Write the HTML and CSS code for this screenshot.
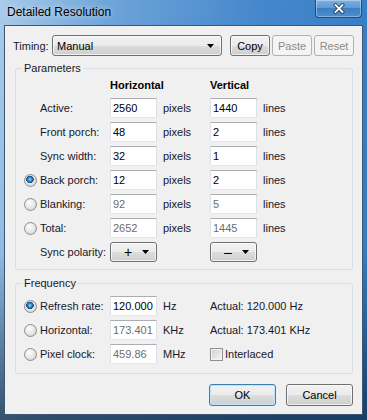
FILE: index.html
```html
<!DOCTYPE html>
<html lang="en">
<head>
    <meta charset="UTF-8">
    <meta name="viewport" content="width=device-width, initial-scale=1.0">
    <title>Detailed Resolution</title>
    <link rel="stylesheet" href="styles.css">
</head>
<body>

    <div class="window">
        <!-- Title bar with close button -->
        <div class="titlebar">
            <span class="title">Detailed Resolution</span>
            <button class="close" type="button">
                <svg width="12" height="11" viewBox="0 0 12 11">
                    <path d="M2.5 2 L9.5 9 M9.5 2 L2.5 9" stroke="#2a3d55" stroke-width="3.6" stroke-linecap="square"/>
                    <path d="M2.5 2 L9.5 9 M9.5 2 L2.5 9" stroke="#ffffff" stroke-width="1.8" stroke-linecap="square"/>
                </svg>
            </button>
        </div>

        <div class="client">
            <!-- Timing selection -->
            <div class="timing">
                <label class="timing-label">Timing:</label>
                <div class="combo">
                    <span>Manual</span>
                    <svg width="7" height="4" viewBox="0 0 7 4"><polygon points="0,0 7,0 3.5,4" fill="#000"/></svg>
                </div>
                <button class="btn small" type="button">Copy</button>
                <button class="btn small" type="button" disabled>Paste</button>
                <button class="btn small" type="button" disabled>Reset</button>
            </div>

            <!-- Parameters group -->
            <fieldset class="group params">
                <legend>Parameters</legend>
                <div class="grid param-grid">
                    <span class="head head-h">Horizontal</span>
                    <span class="head head-v">Vertical</span>

                    <span class="lbl">Active:</span>
                    <input class="field" type="text" value="2560">
                    <span class="unit">pixels</span>
                    <input class="field" type="text" value="1440">
                    <span class="unit">lines</span>

                    <span class="lbl">Front porch:</span>
                    <input class="field" type="text" value="48">
                    <span class="unit">pixels</span>
                    <input class="field" type="text" value="2">
                    <span class="unit">lines</span>

                    <span class="lbl">Sync width:</span>
                    <input class="field" type="text" value="32">
                    <span class="unit">pixels</span>
                    <input class="field" type="text" value="1">
                    <span class="unit">lines</span>

                    <input class="radio" type="radio" name="calc" checked>
                    <span class="lbl">Back porch:</span>
                    <input class="field" type="text" value="12">
                    <span class="unit">pixels</span>
                    <input class="field" type="text" value="2">
                    <span class="unit">lines</span>

                    <input class="radio" type="radio" name="calc">
                    <span class="lbl">Blanking:</span>
                    <input class="field off" type="text" value="92" readonly>
                    <span class="unit">pixels</span>
                    <input class="field off" type="text" value="5" readonly>
                    <span class="unit">lines</span>

                    <input class="radio" type="radio" name="calc">
                    <span class="lbl">Total:</span>
                    <input class="field off" type="text" value="2652" readonly>
                    <span class="unit">pixels</span>
                    <input class="field off" type="text" value="1445" readonly>
                    <span class="unit">lines</span>

                    <span class="lbl">Sync polarity:</span>
                    <div class="btn polarity">
                        <span class="sign">+</span>
                        <svg width="7" height="4" viewBox="0 0 7 4"><polygon points="0,0 7,0 3.5,4" fill="#000"/></svg>
                    </div>
                    <div class="btn polarity pol-v">
                        <span class="sign">&ndash;</span>
                        <svg width="7" height="4" viewBox="0 0 7 4"><polygon points="0,0 7,0 3.5,4" fill="#000"/></svg>
                    </div>
                </div>
            </fieldset>

            <!-- Frequency group -->
            <fieldset class="group freq">
                <legend>Frequency</legend>
                <div class="grid freq-grid">
                    <input class="radio" type="radio" name="freq" checked>
                    <span class="lbl">Refresh rate:</span>
                    <input class="field" type="text" value="120.000">
                    <span class="unit">Hz</span>
                    <span class="actual">Actual: 120.000 Hz</span>

                    <input class="radio" type="radio" name="freq">
                    <span class="lbl">Horizontal:</span>
                    <input class="field off" type="text" value="173.401" readonly>
                    <span class="unit">KHz</span>
                    <span class="actual">Actual: 173.401 KHz</span>

                    <input class="radio" type="radio" name="freq">
                    <span class="lbl">Pixel clock:</span>
                    <input class="field off" type="text" value="459.86" readonly>
                    <span class="unit">MHz</span>
                    <label class="actual check-row"><input class="check" type="checkbox"> Interlaced</label>
                </div>
            </fieldset>

            <!-- Dialog buttons -->
            <div class="actions">
                <button class="btn wide default" type="button">OK</button>
                <button class="btn wide" type="button">Cancel</button>
            </div>
        </div>
    </div>

</body>
</html>
```

FILE: styles.css
```css
body {
    margin: 0;
    font-family: "Liberation Sans", Arial, sans-serif;
    font-size: 11px;
    color: #16182a;
}

.window {
    width: 367px;
    height: 420px;
    display: flex;
    flex-direction: column;
    background:
        linear-gradient(to bottom, rgba(0, 0, 0, 0) 60%, rgba(12, 30, 50, 0.65) 100%),
        linear-gradient(100deg, #a9cbeb 0%, #6ea4d8 25%, #4587cb 60%, #2f79c3 100%);
}

.titlebar {
    height: 25px;
    display: flex;
    justify-content: space-between;
    align-items: flex-start;
}

.title {
    font-size: 12px;
    line-height: 15px;
    padding: 5px 0 0 7px;
    color: #000;
    text-shadow: 0 0 6px rgba(255, 255, 255, 0.8);
}

.close {
    width: 47px;
    height: 18px;
    margin-right: 5px;
    padding: 0;
    border: 1px solid #2b4a70;
    border-top: none;
    border-radius: 0 0 4px 4px;
    background: linear-gradient(#7eb1e2 0%, #5c98d4 50%, #3e7fc4 50%, #4d8ed0 100%);
    box-shadow: inset 0 0 0 1px rgba(255, 255, 255, 0.35);
    display: flex;
    align-items: center;
    justify-content: center;
}

.client {
    margin: 0 4px;
    height: 388px;
    border: 1px solid #3d5773;
    background-color: #f0f0f0;
    display: flex;
    flex-direction: column;
}

/* timing row */
.timing {
    display: flex;
    align-items: center;
    height: 21px;
    margin: 9px 0 0 8px;
}

.timing-label {
    width: 39px;
}

.combo {
    width: 170px;
    height: 21px;
    box-sizing: border-box;
    margin-right: 8px;
    padding: 0 7px 0 4px;
    display: flex;
    align-items: center;
    justify-content: space-between;
    color: #000;
    border: 1px solid #707070;
    border-radius: 3px;
    background: linear-gradient(#f2f2f2 0%, #ebebeb 50%, #dddddd 50%, #cfcfcf 100%);
    box-shadow: inset 0 0 0 1px rgba(255, 255, 255, 0.7);
}

.btn {
    font: inherit;
    color: #000;
    padding: 0;
    box-sizing: border-box;
    border: 1px solid #707070;
    border-radius: 3px;
    background: linear-gradient(#f2f2f2 0%, #ebebeb 50%, #dddddd 50%, #cfcfcf 100%);
    box-shadow: inset 0 0 0 1px rgba(255, 255, 255, 0.7);
}

.btn:disabled {
    color: #8b8b8b;
    border-color: #adb2b5;
    background: #f4f4f4;
    box-shadow: none;
}

.small {
    width: 40px;
    height: 21px;
    margin-right: 2px;
}

/* group boxes */
.group {
    margin: 6px 9px 0 10px;
    padding: 4px 8px 7px 8px;
    border: 1px solid #d5dfe5;
    border-radius: 3px;
    min-width: 0;
}

.group legend {
    line-height: 13px;
    padding: 0 2px;
    margin-left: -2px;
}

.freq {
    margin-top: 7px;
    padding-top: 6px;
    padding-bottom: 9px;
}

.grid {
    display: grid;
    grid-template-columns: 16px 70px 47px 53px 47px auto;
    row-gap: 4px;
    align-items: center;
}

.param-grid {
    grid-template-rows: 15px repeat(7, 20px);
}

.freq-grid {
    grid-template-rows: repeat(3, 20px);
}

.head {
    font-weight: bold;
    color: #000;
    align-self: start;
    line-height: 13px;
}

.head-h {
    grid-column: 3 / span 2;
}

.head-v {
    grid-column: 5 / span 2;
}

.lbl {
    grid-column: 2;
}

.unit {
    padding-left: 6px;
}

.field {
    width: 47px;
    height: 20px;
    box-sizing: border-box;
    margin: 0;
    padding: 0 2px;
    font: inherit;
    color: #000;
    background: #fff;
    border: 1px solid;
    border-color: #abadb3 #dbdfe6 #e3e9ef #e2e3ea;
    outline: none;
}

.field.off {
    color: #6d6d6d;
}

.radio {
    appearance: none;
    width: 13px;
    height: 13px;
    margin: 0;
    border: 1px solid #8d8d8d;
    border-radius: 50%;
    background: radial-gradient(circle at 40% 35%, #ffffff 0%, #e4e4e4 55%, #c9c9c9 100%);
}

.radio:checked {
    background:
        radial-gradient(circle at 45% 40%, #b4e8ff 0, #3a9ae0 1.5px, #1b5f9e 3px, #2d4d6d 3.6px, rgba(0, 0, 0, 0) 4px),
        radial-gradient(circle at 40% 35%, #ffffff 0%, #e4e4e4 55%, #c9c9c9 100%);
}

.polarity {
    grid-column: 3;
    width: 47px;
    height: 20px;
    display: flex;
    align-items: center;
    justify-content: space-between;
    padding: 0 7px 0 13px;
}

.pol-v {
    grid-column: 5;
}

.sign {
    font-size: 14px;
}

.actual {
    grid-column: 5 / span 2;
}

.check-row {
    display: flex;
    align-items: center;
    gap: 2px;
}

.check {
    appearance: none;
    width: 13px;
    height: 13px;
    margin: 0;
    border: 1px solid #8e8f8f;
    background: linear-gradient(135deg, #cfcfcf 0%, #f6f6f6 100%);
    box-shadow: inset 0 0 0 1px #f4f4f4;
}

/* dialog buttons */
.actions {
    display: flex;
    justify-content: flex-end;
    gap: 10px;
    margin: 10px 9px 0 0;
}

.wide {
    width: 67px;
    height: 22px;
}

.default {
    border-color: #3c7fb1;
    box-shadow: inset 0 0 0 1px #bfe3fa;
}
```
